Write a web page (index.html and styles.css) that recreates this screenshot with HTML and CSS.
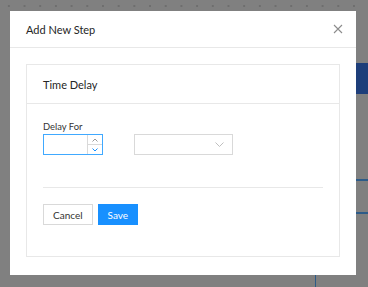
FILE: index.html
```html
<!DOCTYPE html>
<html lang="en">

<head>
  <meta charset="UTF-8">
  <meta name="viewport" content="width=device-width, initial-scale=1.0">
  <title>Add New Step</title>
  <link rel="stylesheet" href="styles.css">
</head>

<body>
  <div class="mask">
    <div class="modal">
      <header class="modal-header">
        <h2>Add New Step</h2>
        <span class="close">
          <svg width="10" height="10" viewBox="0 0 10 10">
            <path d="M1 1 L9 9 M9 1 L1 9" stroke="#8c8c8c" stroke-width="1.1" fill="none" />
          </svg>
        </span>
      </header>

      <div class="modal-body">
        <div class="card">
          <div class="card-head">Time Delay</div>
          <div class="card-body">
            <label class="field-label">Delay For</label>
            <div class="field-row">
              <div class="number-input">
                <input type="text">
                <div class="handler">
                  <span class="up">
                    <svg width="6" height="4" viewBox="0 0 6 4"><path d="M0.5 3.5 L3 1 L5.5 3.5" stroke="#999" fill="none" /></svg>
                  </span>
                  <span class="down">
                    <svg width="6" height="4" viewBox="0 0 6 4"><path d="M0.5 0.5 L3 3 L5.5 0.5" stroke="#1890ff" fill="none" /></svg>
                  </span>
                </div>
              </div>
              <div class="select">
                <svg width="9" height="6" viewBox="0 0 9 6"><path d="M0.5 0.5 L4.5 4.5 L8.5 0.5" stroke="#bfbfbf" fill="none" /></svg>
              </div>
            </div>
            <hr class="divider">
            <div class="actions">
              <button class="btn">Cancel</button>
              <button class="btn btn-primary">Save</button>
            </div>
          </div>
        </div>
      </div>
    </div>
  </div>
</body>

</html>
```

FILE: styles.css
```css
body {
  margin: 0;
  font-family: Lato, "Open Sans", sans-serif;
  background-color: #808080;
  /* dimmed app behind the dialog */
  background-image:
    linear-gradient(#1e3e7a, #1e3e7a),
    linear-gradient(#2d5b88, #2d5b88),
    linear-gradient(#2d5b88, #2d5b88),
    linear-gradient(#2d5b88, #2d5b88),
    radial-gradient(circle, #6e6e6e 0.8px, transparent 1px);
  background-size: 12px 31px, 12px 2px, 12px 2px, 1px 12px, 15.7px 4px;
  background-position: 356px 63px, 356px 179px, 356px 212px, 315px 275px, 1px 4px;
  background-repeat: no-repeat, no-repeat, no-repeat, no-repeat, repeat-x;
  height: 287px;
  overflow: hidden;
}
.mask {
  padding: 11px 0 0 10px;
}
.modal {
  width: 346px;
  height: 264px;
  background-color: #fff;
  box-sizing: border-box;
}
.modal-header {
  height: 36px;
  padding: 0 16px;
  display: flex;
  justify-content: space-between;
  align-items: center;
  border-bottom: 1px solid #e8e8e8;
}
.modal-header h2 {
  margin: 0;
  font-size: 11px;
  font-weight: 400;
  color: #262626;
}
.close {
  display: flex;
  margin-right: -3px;
}
.modal-body {
  padding: 16px;
}
.card {
  border: 1px solid #e8e8e8;
}
.card-head {
  height: 38px;
  padding: 0 16px;
  display: flex;
  align-items: center;
  font-size: 11px;
  color: #262626;
  border-bottom: 1px solid #e8e8e8;
}
.card-body {
  padding: 16px 16px 31px;
}
.field-label {
  display: block;
  font-size: 9.4px;
  line-height: 14px;
  color: #333;
}
.field-row {
  display: flex;
  gap: 31px;
}
.number-input {
  width: 60px;
  height: 21px;
  border: 1px solid #40a9ff;
  box-sizing: border-box;
  display: flex;
}
.number-input input {
  flex: 1;
  width: 0;
  border: none;
  outline: none;
  padding: 0;
}
.handler {
  width: 14px;
  border-left: 1px solid #d9d9d9;
  display: flex;
  flex-direction: column;
}
.handler span {
  flex: 1;
  display: flex;
  align-items: center;
  justify-content: center;
}
.handler .up {
  border-bottom: 1px solid #d9d9d9;
}
.select {
  width: 99px;
  height: 21px;
  border: 1px solid #d9d9d9;
  box-sizing: border-box;
  display: flex;
  justify-content: flex-end;
  align-items: center;
  padding-right: 8px;
}
.divider {
  margin: 32px 0 16px;
  border: none;
  border-top: 1px solid #e8e8e8;
}
.actions {
  display: flex;
  gap: 5px;
}
.btn {
  height: 21px;
  padding: 0 9px;
  font-family: inherit;
  font-size: 10px;
  color: #333;
  background-color: #fff;
  border: 1px solid #d9d9d9;
  border-radius: 0;
}
.btn-primary {
  background-color: #1890ff;
  border-color: #1890ff;
  color: #fff;
}
```
